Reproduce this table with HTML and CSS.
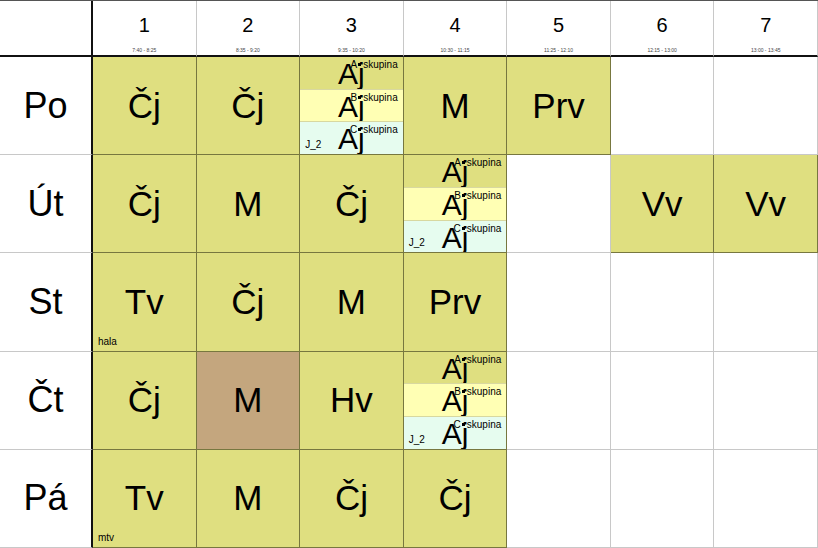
FILE: index.html
```html
<!DOCTYPE html>
<html lang="cs">
<head>
    <meta charset="UTF-8">
    <title>Rozvrh</title>

    <link rel="stylesheet" href="styles.css">

</head>
<body>
<div class="timetable">
    <!-- header -->
    <div class="cell head corner"></div>
    <div class="cell head"><span class="num">1</span><span class="time">7:40 - 8:25</span></div>
    <div class="cell head"><span class="num">2</span><span class="time">8:35 - 9:20</span></div>
    <div class="cell head"><span class="num">3</span><span class="time">9:35 - 10:20</span></div>
    <div class="cell head"><span class="num">4</span><span class="time">10:30 - 11:15</span></div>
    <div class="cell head"><span class="num">5</span><span class="time">11:25 - 12:10</span></div>
    <div class="cell head"><span class="num">6</span><span class="time">12:15 - 13:00</span></div>
    <div class="cell head"><span class="num">7</span><span class="time">13:00 - 13:45</span></div>

    <!-- Po -->
    <div class="cell day">Po</div>
    <div class="cell lesson">Čj</div>
    <div class="cell lesson">Čj</div>
    <div class="cell lesson split">
        <div class="group ga"><span class="subj">Aj</span><span class="grp">A<i></i>skupina</span></div>
        <div class="group gb"><span class="subj">Aj</span><span class="grp">B<i></i>skupina</span></div>
        <div class="group gc"><span class="subj">Aj</span><span class="grp">C<i></i>skupina</span><span class="room">J_2</span></div>
    </div>
    <div class="cell lesson">M</div>
    <div class="cell lesson">Prv</div>
    <div class="cell"></div>
    <div class="cell"></div>

    <!-- Út -->
    <div class="cell day">Út</div>
    <div class="cell lesson">Čj</div>
    <div class="cell lesson">M</div>
    <div class="cell lesson">Čj</div>
    <div class="cell lesson split">
        <div class="group ga"><span class="subj">Aj</span><span class="grp">A<i></i>skupina</span></div>
        <div class="group gb"><span class="subj">Aj</span><span class="grp">B<i></i>skupina</span></div>
        <div class="group gc"><span class="subj">Aj</span><span class="grp">C<i></i>skupina</span><span class="room">J_2</span></div>
    </div>
    <div class="cell"></div>
    <div class="cell lesson">Vv</div>
    <div class="cell lesson">Vv</div>

    <!-- St -->
    <div class="cell day">St</div>
    <div class="cell lesson">Tv<span class="room">hala</span></div>
    <div class="cell lesson">Čj</div>
    <div class="cell lesson">M</div>
    <div class="cell lesson">Prv</div>
    <div class="cell"></div>
    <div class="cell"></div>
    <div class="cell"></div>

    <!-- Čt -->
    <div class="cell day">Čt</div>
    <div class="cell lesson">Čj</div>
    <div class="cell lesson changed">M</div>
    <div class="cell lesson">Hv</div>
    <div class="cell lesson split">
        <div class="group ga"><span class="subj">Aj</span><span class="grp">A<i></i>skupina</span></div>
        <div class="group gb"><span class="subj">Aj</span><span class="grp">B<i></i>skupina</span></div>
        <div class="group gc"><span class="subj">Aj</span><span class="grp">C<i></i>skupina</span><span class="room">J_2</span></div>
    </div>
    <div class="cell"></div>
    <div class="cell"></div>
    <div class="cell"></div>

    <!-- Pá -->
    <div class="cell day">Pá</div>
    <div class="cell lesson">Tv<span class="room">mtv</span></div>
    <div class="cell lesson">M</div>
    <div class="cell lesson">Čj</div>
    <div class="cell lesson">Čj</div>
    <div class="cell"></div>
    <div class="cell"></div>
    <div class="cell"></div>
</div>
</body>
</html>
```

FILE: styles.css
```css
* {
    box-sizing: border-box;
}

body {
    margin: 0;
    background-color: #fff;
    font-family: "Liberation Sans", Arial, sans-serif;
    color: #000;
}

.timetable {
    display: grid;
    grid-template-columns: 93px repeat(7, minmax(0, 1fr));
    grid-template-rows: 56px repeat(5, minmax(0, 1fr));
    width: 818px;
    height: 548px;
    border-top: 1px solid #555;
}

.cell {
    position: relative;
    display: flex;
    justify-content: center;
    align-items: center;
    min-height: 0;
    border-right: 1px solid #c8c8c8;
    border-bottom: 1px solid #c8c8c8;
    font-size: 35px;
}

.head {
    flex-direction: column;
    border-bottom: 2px solid #111;
}

.head .num {
    font-size: 20px;
    margin-top: 10px;
}

.head .time {
    font-size: 5px;
    color: #444;
    margin-top: 10px;
}

.corner,
.day {
    border-right: 2px solid #111;
}

.day {
    font-size: 36px;
}

.lesson {
    background-color: #dfdf80;
    border-right-color: #77773f;
    border-bottom-color: #77773f;
}

.changed {
    background-color: #c4a67e;
}

.room {
    position: absolute;
    left: 5px;
    bottom: 4px;
    font-size: 10px;
}

.split {
    flex-direction: column;
    align-items: stretch;
    overflow: hidden;
}

.group {
    position: relative;
    flex: 1 1 0;
    min-height: 0;
    display: flex;
    justify-content: center;
    align-items: flex-start;
    overflow: hidden;
}

.group + .group {
    border-top: 1px solid #d8d8a0;
}

.gb {
    background-color: #ffffb4;
}

.gc {
    background-color: #e6fcef;
}

.group .subj {
    font-size: 30px;
    line-height: 33px;
    margin-top: 0;
}

.grp {
    position: absolute;
    top: 2px;
    right: 5px;
    font-size: 10px;
}

.grp i {
    display: inline-block;
    width: 3px;
    height: 3px;
    margin: 0 2px 2px 1px;
    background-color: #000;
}
```
